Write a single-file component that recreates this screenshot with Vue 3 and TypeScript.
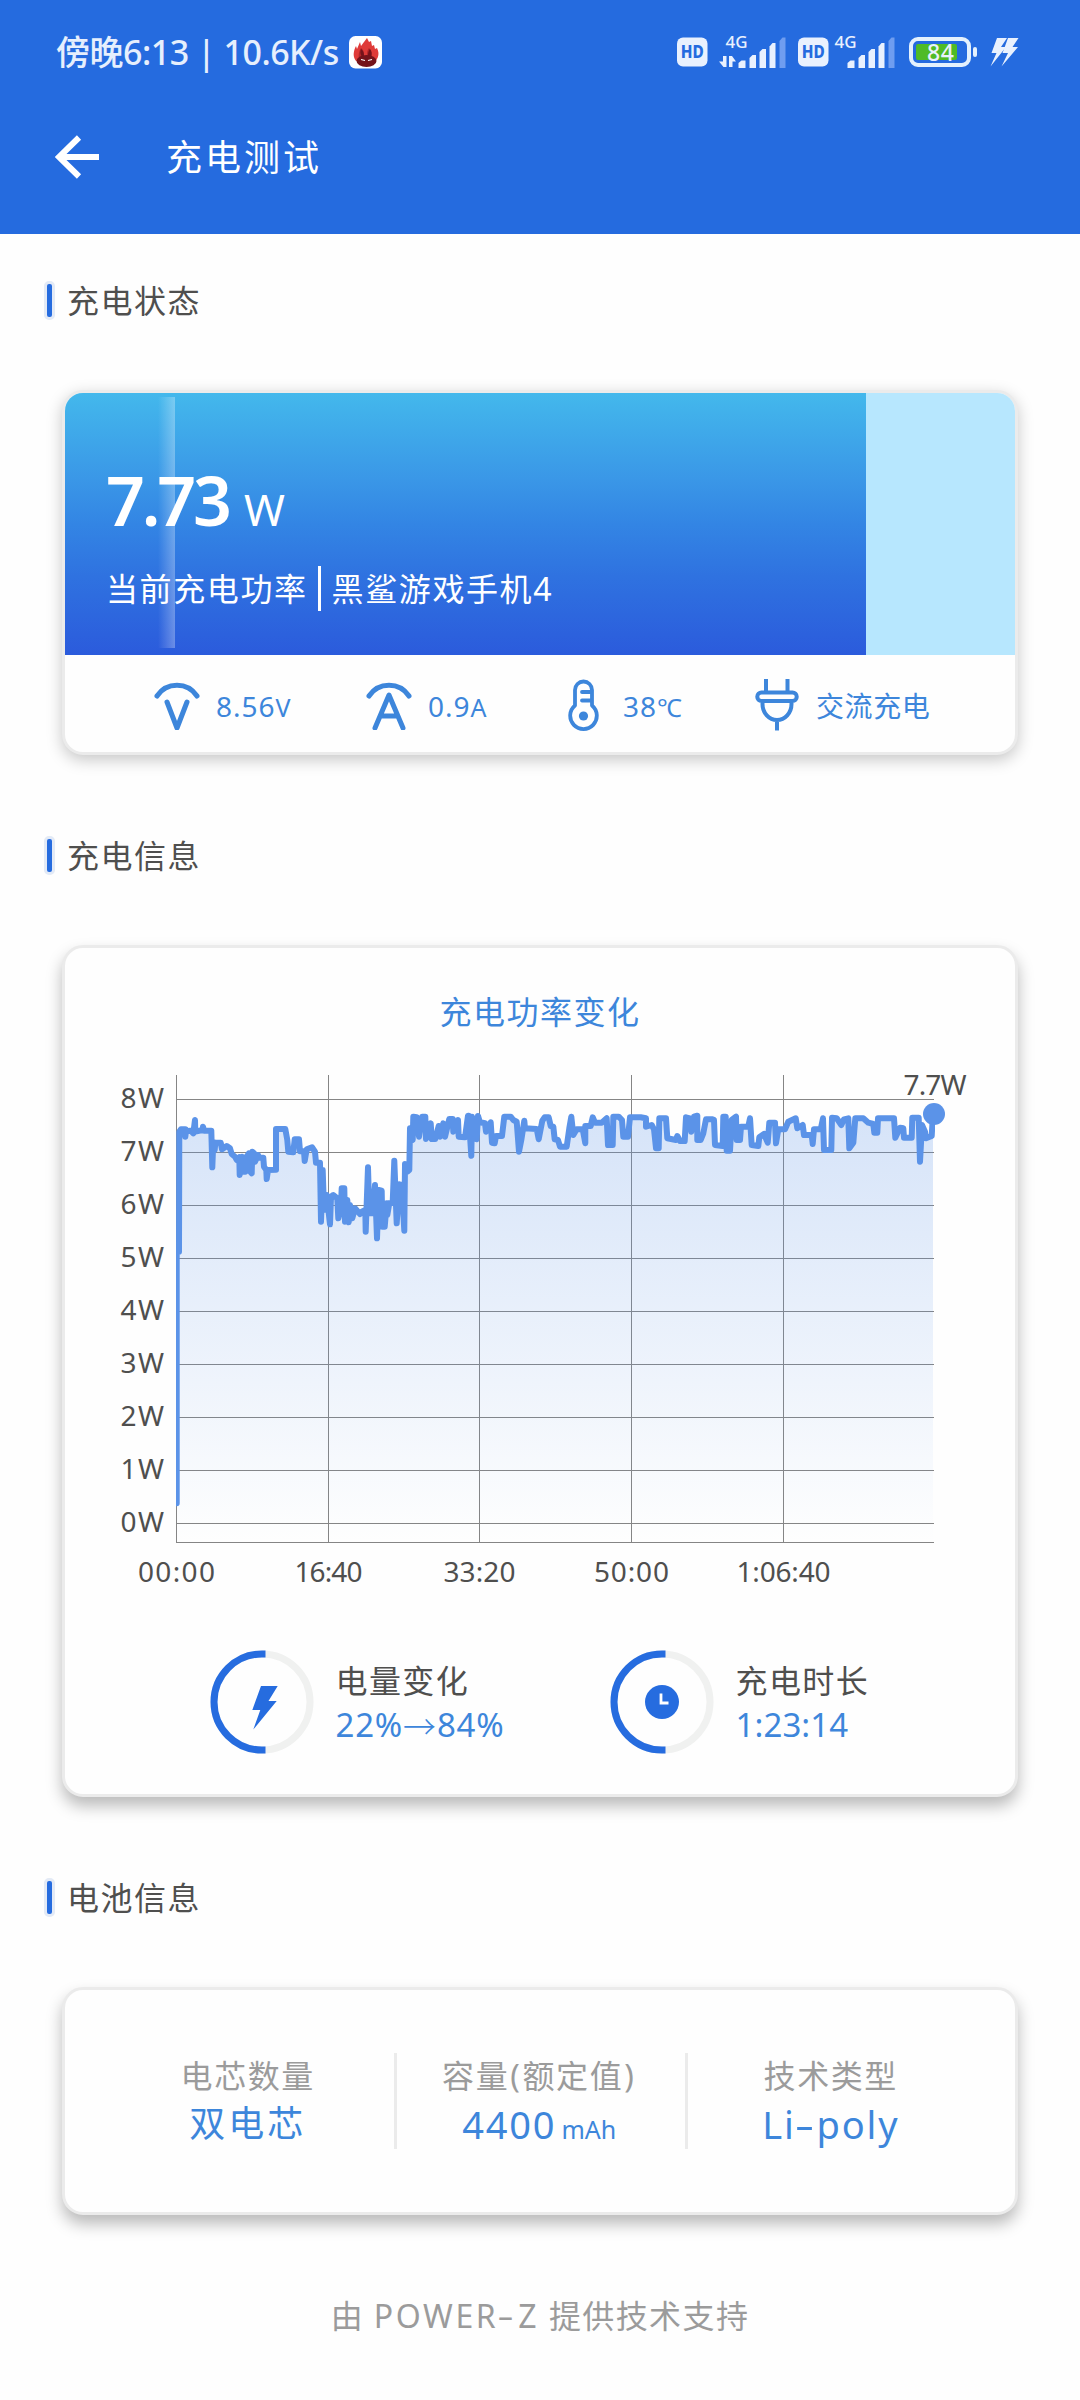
<script setup lang="ts">
type Point = [number, number]

interface Trace {
  origin: number
  points: Point[]
}

const level = { width: 84.3 }

// Sampled power curve. Values are thirds of a pixel, each trace has its own x origin.
const traces: Trace[] = [
  {
    origin: 100,
    points: [
      [230, 1330], [230, 575], [237, 575], [238, 215], [243, 208], [256, 208], [256, 230], [258, 213], [272, 212],
      [280, 220], [285, 180], [286, 215], [308, 210], [309, 200], [312, 212], [334, 212], [337, 322], [340, 245],
      [344, 270], [346, 248], [362, 248], [366, 268], [380, 258], [390, 265], [395, 282], [405, 290], [410, 300],
      [418, 292], [419, 345], [426, 290], [430, 335], [436, 335], [440, 290], [447, 280], [447, 330], [455, 340],
      [457, 275], [462, 280], [465, 305], [474, 285], [478, 293], [490, 293], [492, 320], [499, 330], [500, 357],
      [504, 330], [528, 329], [528, 207], [556, 207], [562, 240], [565, 275], [580, 277], [584, 238], [597, 238],
      [600, 274], [612, 274], [614, 303], [620, 268], [636, 262], [645, 275], [648, 308], [660, 308], [663, 485],
      [668, 330], [672, 450], [680, 405], [690, 493], [693, 410], [700, 405], [712, 415], [715, 475], [722, 450],
      [725, 385], [733, 385], [735, 485], [742, 420], [746, 487], [750, 435], [757, 475], [765, 445], [780, 462],
      [785, 455], [796, 450], [797, 515], [804, 322], [808, 460], [818, 460], [825, 375], [831, 535], [836, 390],
      [845, 392], [847, 500], [854, 500], [860, 430], [862, 465], [868, 430], [878, 428], [883, 302], [890, 490],
      [898, 373], [905, 375], [913, 512], [915, 312],
    ],
  },
  {
    origin: 400,
    points: [
      [22, 335], [28, 330], [30, 205], [38, 240], [40, 170], [50, 172], [57, 230], [66, 170], [76, 170], [78, 237],
      [92, 190], [95, 237], [106, 237], [116, 198], [120, 230], [130, 190], [135, 230], [148, 177], [158, 177],
      [160, 215], [174, 180], [176, 230], [195, 232], [204, 167], [206, 167], [214, 287], [216, 170], [230, 238],
      [234, 168], [240, 187], [255, 190], [258, 215], [272, 187], [276, 248], [284, 250], [288, 228], [306, 228],
      [313, 170], [332, 170], [340, 180], [350, 185], [357, 275], [364, 240], [373, 182], [375, 205], [410, 207],
      [416, 238], [427, 182], [434, 172], [446, 172], [452, 198], [460, 200], [464, 238], [474, 240], [480, 260],
      [500, 260], [508, 205], [514, 170], [520, 225], [530, 208], [548, 208], [556, 250], [556, 198], [572, 198],
      [578, 172], [585, 188], [605, 188], [620, 175], [624, 255], [638, 255], [640, 170], [656, 170], [666, 180],
      [670, 230], [684, 230], [690, 172], [722, 172], [738, 175], [738, 200], [755, 195], [762, 208], [768, 265],
      [776, 265], [778, 175], [798, 175], [802, 235], [828, 240], [832, 228], [840, 243], [854, 243], [858, 172],
      [870, 175], [874, 215], [882, 170], [892, 167], [892, 240], [902, 240], [910, 220], [918, 178], [938, 178],
    ],
  },
  {
    origin: 680,
    points: [
      [102, 180], [105, 255], [128, 258], [130, 170], [137, 170], [140, 272], [150, 272], [155, 180], [168, 170],
      [170, 240], [180, 240], [183, 200], [205, 200], [210, 175], [215, 255], [235, 258], [238, 232], [252, 222],
      [263, 248], [268, 188], [285, 188], [288, 250], [295, 208], [315, 208], [325, 185], [347, 175], [352, 205],
      [368, 195], [372, 225], [395, 225], [398, 252], [402, 208], [422, 208], [429, 175], [432, 270], [454, 270],
      [456, 173], [470, 175], [484, 195], [492, 178], [505, 175], [508, 265], [520, 248], [526, 175], [550, 175],
      [565, 188], [580, 192], [583, 218], [592, 218], [594, 175], [642, 175], [646, 233], [660, 203], [670, 205],
      [672, 233], [695, 233], [697, 173], [716, 173], [720, 305], [726, 195], [735, 215], [738, 235], [755, 228],
      [759, 162],
    ],
  },
]

const line = traces
  .flatMap((t) => t.points.map(([x, y]) => `${(t.origin + x / 3).toFixed(1)},${(1060 + y / 3).toFixed(1)}`))
  .join(' ')
const area = `${line} 933,1542 176.5,1542`

const yTicks = [8, 7, 6, 5, 4, 3, 2, 1, 0].map((w) => ({ label: `${w}W`, y: 1523.5 - w * 53 }))
const xTicks = [
  { label: '00:00', x: 176.5, w: 77 },
  { label: '16:40', x: 328.5, w: 68 },
  { label: '33:20', x: 479.5, w: 72 },
  { label: '50:00', x: 631.5, w: 75 },
  { label: '1:06:40', x: 783.5, w: 94 },
]
</script>

<template>
  <div class="screen">
    <header class="top">
      <div class="status">
        <span class="clock">傍晚6:13 | 10.6K/s</span>
        <svg class="app-icon" viewBox="0 0 33 33">
          <rect width="33" height="32.5" rx="6.5" fill="#fff" />
          <path d="M7 25C3 20 5 14 7 10l1 3 3-7 1 4 3-4 3-4 2 4 2-1 1 5 2-1 1 4 2-1c3 6 1 10-2 14z" fill="#df3a38" />
          <path d="M10 23c-1-4 0-8 2-11 3 2 3 5 3 8h3c0-3 0-6 2-8 3 3 3 7 3 11z" fill="#b3262a" />
          <ellipse cx="17.5" cy="25" rx="10" ry="6" fill="#74131b" />
          <path d="M13 21c-2-3-2-6-1-8 3 2 3 5 3 7zM19 21c0-3 0-6 2-8 2 2 2 5 1 8z" fill="#74131b" />
          <path d="M12 23.5l4 1M23 23.5l-4 1" stroke="#fff" stroke-width="1.2" />
        </svg>
        <svg class="signals" viewBox="670 30 360 42">
          <g v-for="x in [677, 798]" :key="x">
            <rect :x="x" y="37.5" width="30.5" height="29" rx="6" fill="#e9f1fe" />
            <text :x="x + 15.3" y="58" class="hd" textLength="23" lengthAdjust="spacingAndGlyphs">HD</text>
          </g>
          <text x="736.5" y="47.5" class="net" textLength="22" lengthAdjust="spacingAndGlyphs">4G</text>
          <text x="845.5" y="47.5" class="net" textLength="22" lengthAdjust="spacingAndGlyphs">4G</text>
          <path d="M719 61.500h4v-5.500h3.500v11h-3zM729 56h3l4 5.500h-3.500v5.500h-3.500z" fill="#e9f1fe" />
          <g v-for="x in [738.5, 847.5]" :key="x" fill="#e9f1fe">
            <path :d="`M${x} 68v-5l3-2.500h4v7.500z`" />
            <path :d="`M${x + 11} 68v-10l3-3h3.500v13z`" />
            <path :d="`M${x + 21} 68v-16l3-3h3.500v19z`" />
            <path :d="`M${x + 31} 68v-21.500l3-3.500h3v25z`" />
            <path :d="`M${x + 41} 68v-27l3-3.500h3v30.500z`" fill="#6f9df0" />
          </g>
          <rect x="911" y="39" width="58" height="26" rx="7" fill="none" stroke="#e4f1fd" stroke-width="4" />
          <rect x="916" y="44" width="41" height="16" rx="2" fill="#4fbb26" />
          <rect x="973" y="47" width="4" height="10" rx="2" fill="#e4f1fd" />
          <text x="940.5" y="61" class="pct" textLength="27">84</text>
          <path d="M997 38h10l-6 9h5l-15.500 19.500 6-13.500h-5z" fill="#e9f1fe" />
          <path d="M1008 38h10.500l-6 9h5.500l-16.500 19.500 6.500-13.500h-5.500z" fill="#e9f1fe" />
        </svg>
      </div>
      <div class="bar">
        <svg class="back" viewBox="0 0 44 44">
          <path d="M24 2.500L4 22l20 19.500M4 22h40" fill="none" stroke="#fff" stroke-width="6" />
        </svg>
        <h1>充电测试</h1>
      </div>
    </header>

    <h2><i></i><span>充电状态</span></h2>
    <section class="card state">
      <div class="hero">
        <div class="fill" :style="{ width: level.width + '%' }"></div>
        <div class="shine"></div>
        <div class="power"><b>7.73</b><span>W</span></div>
        <div class="desc"><span>当前充电功率</span><i></i><span>黑鲨游戏手机4</span></div>
      </div>
      <div class="metrics">
        <div class="metric volt">
          <svg width="46" height="50" viewBox="0 0 46 50">
            <path d="M3 16A24 24 0 0 1 43 16M13 22l10 26 10-26" />
          </svg>
          <span>8.56<small>V</small></span>
        </div>
        <div class="metric amp">
          <svg width="46" height="50" viewBox="0 0 46 50">
            <path d="M3 16A24 24 0 0 1 43 16M9 48l14-33 14 33M15 36h16" />
          </svg>
          <span>0.9<small>A</small></span>
        </div>
        <div class="metric temp">
          <svg width="32" height="52" viewBox="0 0 32 52">
            <path
              d="M8 11a8 8 0 0 1 17 0v15.500a13.300 13.300 0 1 1-17 0zM15 13h9M15 21.500h9"
              style="stroke-width: 3.8px"
            />
            <circle cx="16.500" cy="37" r="4.600" />
          </svg>
          <span>38<small>℃</small></span>
        </div>
        <div class="metric plug">
          <svg width="44" height="52" viewBox="0 0 44 52">
            <path
              d="M11 0v13M32.500 0v13M6.500 13.500h31a3.700 3.700 0 0 1 0 8.500h-31a3.700 3.700 0 0 1 0-8.500zM7.500 22v3a14.500 16 0 0 0 29 0v-3M22 42v9.500"
              style="stroke-width: 4px; stroke-linecap: butt"
            />
          </svg>
          <span class="cn">交流充电</span>
        </div>
      </div>
    </section>

    <h2><i></i><span>充电信息</span></h2>
    <section class="card info deep">
      <h3>充电功率变化</h3>
      <svg class="chart" viewBox="65 1060 950 540">
        <defs>
          <linearGradient id="areaFill" gradientUnits="userSpaceOnUse" x1="0" y1="1110" x2="0" y2="1542">
            <stop offset="0" stop-color="#5b93e8" stop-opacity="0.25" />
            <stop offset="1" stop-color="#5b93e8" stop-opacity="0" />
          </linearGradient>
          <clipPath id="plot"><rect x="176" y="1075" width="759" height="468" /></clipPath>
        </defs>
        <g stroke="#858585" stroke-width="1">
          <line v-for="t in yTicks" :key="t.label" x1="176" x2="934" :y1="t.y" :y2="t.y" />
          <line v-for="t in xTicks" :key="t.label" :x1="t.x" :x2="t.x" y1="1075" y2="1542" />
          <line x1="176" x2="934" y1="1542.500" y2="1542.500" />
        </g>
        <polygon :points="area" fill="url(#areaFill)" />
        <polyline :points="line" class="curve" clip-path="url(#plot)" />
        <circle cx="934" cy="1114" r="11" fill="#5b93e8" />
        <text v-for="t in yTicks" :key="t.label" x="164" :y="t.y + 8.500" text-anchor="end" textLength="43.500">{{ t.label }}</text>
        <text v-for="t in xTicks" :key="t.label" :x="t.x" y="1582" text-anchor="middle" :textLength="t.w">{{ t.label }}</text>
        <text x="935" y="1095" text-anchor="middle" textLength="63">7.7W</text>
      </svg>
      <div class="stats">
        <div class="stat">
          <svg width="104" height="104" viewBox="-52 -52 104 104">
            <circle r="48" fill="none" stroke="#f0f1f0" stroke-width="7" />
            <path d="M3.500-48H0a48 48 0 0 0 0 96h3.500" fill="none" stroke="#266cdf" stroke-width="7" />
            <path d="M-1-16H15.700L6.500-1H14.700L-8.700 27.500-1.700 8H-9.700z" fill="#266cdf" />
          </svg>
          <div><p>电量变化</p><strong>22%<em>→</em>84%</strong></div>
        </div>
        <div class="stat">
          <svg width="104" height="104" viewBox="-52 -52 104 104">
            <circle r="48" fill="none" stroke="#f0f1f0" stroke-width="7" />
            <path d="M3.500-48H0a48 48 0 0 0 0 96h3.500" fill="none" stroke="#266cdf" stroke-width="7" />
            <circle r="17" fill="#266cdf" />
            <path d="M-1-8.500V1H6.500" fill="none" stroke="#fff" stroke-width="2.800" />
          </svg>
          <div><p>充电时长</p><strong class="time">1:23:14</strong></div>
        </div>
      </div>
    </section>

    <h2><i></i><span>电池信息</span></h2>
    <section class="card battery deep">
      <div class="cell"><p>电芯数量</p><strong class="cn">双电芯</strong></div>
      <div class="cell"><p>容量<u>(</u>额定值<u>)</u></p><strong>4400<small>mAh</small></strong></div>
      <div class="cell"><p>技术类型</p><strong class="poly">Li<s>-</s>poly</strong></div>
    </section>
    <footer>由 <span>POWER<s>-</s>Z</span> 提供技术支持</footer>
  </div>
</template>

<style>
body {
  background: #fefefe;
}
</style>

<style scoped>
.screen {
  width: 1080px;
  height: 2400px;
  overflow: hidden;
  background: #fefefe;
  color: #4f4f4e;
  font-family: 'Noto Sans', 'Noto Sans CJK SC', sans-serif;
}
h1, h2, h3, p {
  margin: 0;
  font-weight: 400;
}
/* wide hyphen */
s {
  display: inline-block;
  text-decoration: none;
  transform: scaleX(1.6);
  margin: 0 4px 0 3px;
}
u {
  text-decoration: none;
  margin: 0 1px;
}
.top {
  height: 234px;
  background: #256bdf;
  color: #fff;
}
.status {
  height: 104px;
  display: flex;
  align-items: center;
  padding-left: 56px;
}
.clock {
  width: 293px;
  white-space: nowrap;
  font-size: 34px;
  line-height: 40px;
  font-weight: 500;
  letter-spacing: -0.5px;
  color: #e6effd;
}
.app-icon {
  width: 33px;
  height: 33px;
}
.signals {
  width: 360px;
  height: 42px;
  margin: -2px 0 0 288px;
}
.signals text {
  text-anchor: middle;
  fill: #e9f1fe;
}
.signals .hd {
  font-size: 17px;
  font-weight: 800;
  fill: #256bdf;
}
.signals .net {
  font-size: 17px;
  font-weight: 500;
}
.signals .pct {
  font-size: 23px;
  font-weight: 500;
}
.bar {
  height: 106px;
  display: flex;
  align-items: center;
  padding-left: 55px;
}
.back {
  width: 44px;
  height: 44px;
}
h1 {
  margin: 2px 0 0 67px;
  font-size: 36px;
  line-height: 50px;
  letter-spacing: 3px;
}
h2 {
  height: 39px;
  display: flex;
  align-items: center;
  margin: 81px 0 70px 44px;
  font-size: 32px;
  line-height: 39px;
  letter-spacing: 1.5px;
}
.top + h2 {
  margin-top: 47px;
}
h2 i {
  box-sizing: border-box;
  width: 11px;
  height: 39px;
  margin-right: 12px;
  border: 3px solid #e3eaf6;
  border-radius: 5px;
  background: #266cdf;
}
.card {
  box-sizing: border-box;
  width: 956px;
  margin: 0 62px;
  border: 3px solid #ebebeb;
  border-radius: 21px;
  background: #fefefe;
  box-shadow: 0 5px 16px rgba(0, 0, 0, 0.22);
}
.deep {
  box-shadow: 0 9px 16px rgba(0, 0, 0, 0.27);
}
.state {
  height: 365px;
}
.hero {
  position: relative;
  height: 262px;
  box-sizing: border-box;
  padding: 70px 0 0 41px;
  border-radius: 18px 18px 0 0;
  overflow: hidden;
  background: #b7e7fe;
  color: #fff;
}
.fill {
  position: absolute;
  inset: 0 auto 0 0;
  background: linear-gradient(#43b8ec 0%, #3a97e7 33%, #3385e4 50%, #2f72e0 70%, #2b5bdc 100%);
}
.shine {
  position: absolute;
  left: 93px;
  top: 4px;
  width: 17px;
  height: 251px;
  background: linear-gradient(90deg, rgba(255, 255, 255, 0), rgba(255, 255, 255, 0.3));
}
.power {
  position: relative;
  height: 74px;
  line-height: 74px;
  display: flex;
  align-items: baseline;
}
.power b {
  width: 138px;
  font-size: 68px;
  font-weight: 600;
  letter-spacing: -3.2px;
}
.power span {
  font-size: 44px;
}
.desc {
  position: relative;
  display: flex;
  align-items: center;
  height: 45px;
  margin-top: 29px;
  font-size: 32px;
  line-height: 45px;
  letter-spacing: 1.6px;
}
.desc i {
  width: 3px;
  height: 45px;
  margin: 0 11px 0 10px;
  background: #fff;
}
.metrics {
  display: flex;
  align-items: center;
  height: 97px;
  padding: 3px 0 0 89px;
  box-sizing: border-box;
}
.metric {
  display: flex;
  align-items: center;
  color: #3d86db;
  font-size: 28px;
  line-height: 40px;
  letter-spacing: 1px;
  white-space: nowrap;
}
.metric span {
  padding-top: 2px;
}
.metric .cn {
  letter-spacing: 0.6px;
}
.metric svg path {
  fill: none;
  stroke: #3d86db;
  stroke-width: 5px;
  stroke-linecap: round;
  stroke-linejoin: round;
}
.metric circle {
  fill: #3d86db;
}
.metric small {
  font-size: 25px;
}
.volt, .amp {
  width: 212px;
  gap: 16px;
}
.amp {
  width: 201px;
}
.temp {
  width: 188px;
  gap: 24px;
}
.plug {
  gap: 17px;
}
.info {
  height: 852px;
}
h3 {
  padding-top: 40px;
  height: 72px;
  line-height: 48px;
  text-align: center;
  font-size: 32px;
  letter-spacing: 1.5px;
  color: #3d86db;
}
.chart {
  display: block;
  width: 950px;
  height: 540px;
}
.chart text {
  font-size: 28px;
  fill: #4f4f4e;
}
.curve {
  fill: none;
  stroke: #5b93e8;
  stroke-width: 6px;
  stroke-linejoin: round;
  stroke-linecap: round;
}
.stats {
  display: flex;
  padding: 50px 0 0 144.5px;
}
.stat {
  width: 400px;
  display: flex;
  gap: 22px;
}
.stat div {
  padding-top: 9px;
}
.stat p {
  height: 44px;
  line-height: 44px;
  font-size: 32px;
  letter-spacing: 1.4px;
}
.stat strong {
  display: flex;
  font-weight: 400;
  font-size: 33px;
  line-height: 44px;
  letter-spacing: 0.8px;
  color: #3d86db;
}
.stat .time {
  letter-spacing: 0.1px;
}
.stat em {
  font-style: normal;
  font-family: 'Noto Sans CJK SC', sans-serif;
  font-weight: 300;
}
.battery {
  height: 228px;
  display: flex;
  padding: 63px 37px 0;
}
.cell {
  width: 291.5px;
  height: 96px;
  box-sizing: border-box;
  text-align: center;
}
.cell + .cell {
  border-left: 3px solid #ebebeb;
  padding-right: 3px;
}
.cell p {
  height: 46px;
  line-height: 46px;
  font-size: 32px;
  letter-spacing: 1.6px;
  color: #9b9b9b;
}
.cell strong {
  display: block;
  height: 50px;
  line-height: 50px;
  font-weight: 450;
  font-size: 38px;
  letter-spacing: 1.8px;
  color: #3d86db;
}
.cell .cn {
  font-size: 36px;
  font-weight: 400;
  letter-spacing: 3px;
}
.cell small {
  margin-left: 5px;
  font-size: 25px;
  font-weight: 400;
  letter-spacing: 0;
}
footer {
  margin-top: 77px;
  text-align: center;
  font-size: 32px;
  line-height: 48px;
  letter-spacing: 1.4px;
  color: #9b9b9b;
}
footer span {
  letter-spacing: 2.6px;
}
</style>
